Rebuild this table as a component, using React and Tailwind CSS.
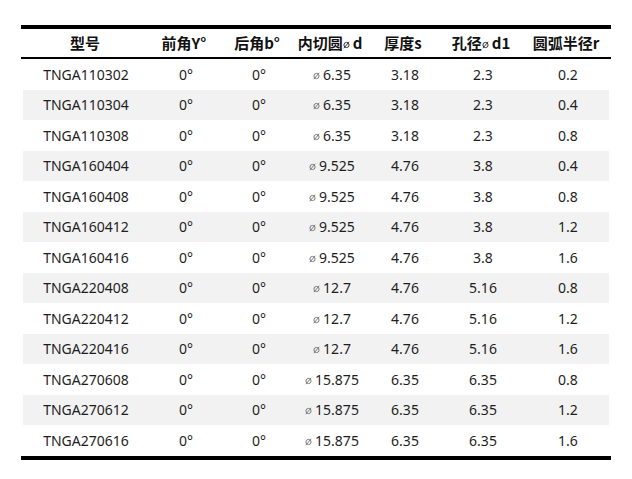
import React from "react";

const rows = [
  ["TNGA110302", "6.35", "3.18", "2.3", "0.2"],
  ["TNGA110304", "6.35", "3.18", "2.3", "0.4"],
  ["TNGA110308", "6.35", "3.18", "2.3", "0.8"],
  ["TNGA160404", "9.525", "4.76", "3.8", "0.4"],
  ["TNGA160408", "9.525", "4.76", "3.8", "0.8"],
  ["TNGA160412", "9.525", "4.76", "3.8", "1.2"],
  ["TNGA160416", "9.525", "4.76", "3.8", "1.6"],
  ["TNGA220408", "12.7", "4.76", "5.16", "0.8"],
  ["TNGA220412", "12.7", "4.76", "5.16", "1.2"],
  ["TNGA220416", "12.7", "4.76", "5.16", "1.6"],
  ["TNGA270608", "15.875", "6.35", "6.35", "0.8"],
  ["TNGA270612", "15.875", "6.35", "6.35", "1.2"],
  ["TNGA270616", "15.875", "6.35", "6.35", "1.6"],
];

const grid = "grid grid-cols-[128px_70px_76px_70px_76px_80px_90px] items-center";

function Dia({ dark }) {
  return (
    <svg width="7" height="8" viewBox="0 0 7 8" className="inline-block mr-[3px] align-baseline">
      <circle cx="3.5" cy="4" r="2.6" fill="none" stroke={dark ? "#333" : "#7a7a7a"} strokeWidth="1" />
      <line x1="6.2" y1="0.8" x2="0.8" y2="7.2" stroke={dark ? "#333" : "#7a7a7a"} strokeWidth="1" />
    </svg>
  );
}

export default function App() {
  return (
    <div className="w-[632px] h-[479px] bg-white pt-[25px] pl-[21px] text-[#1e1e1e]" style={{ fontFamily: '"Noto Sans", "Noto Sans CJK SC", sans-serif' }}>
      <div className="w-[590px]">
        <div className="h-[4px] bg-black" />
        <div className={`${grid} h-[28px] font-bold text-[15px] text-[#111]`} style={{ fontFamily: '"Noto Sans CJK SC", "Noto Sans", sans-serif' }}>
          <div className="text-center">型号</div>
          <div className="text-center">前角Y°</div>
          <div className="text-center">后角b°</div>
          <div className="text-center whitespace-nowrap">内切圆<Dia dark />d</div>
          <div className="text-center">厚度s</div>
          <div className="text-center whitespace-nowrap">孔径<Dia dark />d1</div>
          <div className="text-center">圆弧半径r</div>
        </div>
        <div className="h-[2px] bg-black" />
        {rows.map((r, i) => (
          <div key={r[0]} className={`${grid} h-[30.5px] text-[14px] mx-[2px] ${i % 2 === 1 ? "bg-[#f2f2f2]" : "bg-white"}`}>
            <div className="text-center -ml-[2px]">{r[0]}</div>
            <div className="text-center">0°</div>
            <div className="text-center">0°</div>
            <div className="text-center whitespace-nowrap"><Dia />{r[1]}</div>
            <div className="text-center">{r[2]}</div>
            <div className="text-center">{r[3]}</div>
            <div className="text-center">{r[4]}</div>
          </div>
        ))}
        <div className="h-[4px] bg-black" />
      </div>
    </div>
  );
}
